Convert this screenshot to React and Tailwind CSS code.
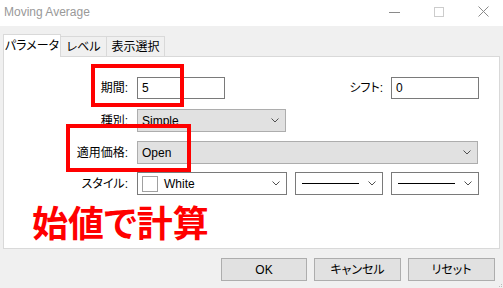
import React from "react";

const Chevron = () => (
    <svg width="8" height="5" viewBox="0 0 8 5" className="shrink-0">
        <polyline points="0.5,0.5 4,4 7.5,0.5" fill="none" stroke="#505050" strokeWidth="1" />
    </svg>
);

const Label = ({ children }) => (
    <div className="w-[125px] pr-[1px] text-right text-[12px] text-black">{children}</div>
);

const Select = ({ width, children, white }) => (
    <div
        className={`${width} h-[23px] flex items-center pl-[4px] pr-[6px] border ${
            white ? "bg-white border-[#7a7a7a]" : "bg-[#e1e1e1] border-[#adadad]"
        }`}
    >
        <div className="flex-1 flex items-center text-[12px] text-black">{children}</div>
        <Chevron />
    </div>
);

const Button = ({ children, w }) => (
    <div className={`${w} h-[23px] flex items-center justify-center bg-[#e1e1e1] border border-[#adadad] text-[12px] text-black`}>
        {children}
    </div>
);

export default function App() {
    return (
        <div className="w-[503px] h-[288px] bg-[#f0f0f0] flex flex-col overflow-hidden font-['Liberation_Sans','Noto_Sans_CJK_JP',sans-serif] [font-feature-settings:'palt']">
            {/* title bar */}
            <div className="h-[26px] bg-white flex items-start shrink-0">
                <div className="pl-[4px] pt-[4px] text-[12px] leading-[16px] text-[#999999]">Moving Average</div>
                <div className="ml-auto flex items-center gap-[34px] pr-[14px] pt-[6px]">
                    <svg width="11" height="10" viewBox="0 0 11 10">
                        <line x1="0" y1="5.5" x2="11" y2="5.5" stroke="#8a8a8a" strokeWidth="1" />
                    </svg>
                    <svg width="10" height="10" viewBox="0 0 10 10">
                        <rect x="0.5" y="0.5" width="9" height="9" fill="none" stroke="#cccccc" strokeWidth="1" />
                    </svg>
                    <svg width="11" height="11" viewBox="0 0 11 11">
                        <line x1="0.5" y1="0.5" x2="10.5" y2="10.5" stroke="#8a8a8a" strokeWidth="1" />
                        <line x1="10.5" y1="0.5" x2="0.5" y2="10.5" stroke="#8a8a8a" strokeWidth="1" />
                    </svg>
                </div>
            </div>

            {/* tabs */}
            <div className="mt-[8px] pl-[3px] h-[22px] flex items-end shrink-0 text-[12px] text-black">
                <div className="relative z-10 -mb-px w-[58px] h-[23px] bg-white border border-b-0 border-[#d9d9d9] flex items-center justify-center">
                    パラメータ
                </div>
                <div className="w-[46px] h-[20px] border-t border-r border-[#d9d9d9] flex items-center justify-center">
                    レベル
                </div>
                <div className="w-[58px] h-[20px] border-t border-r border-[#d9d9d9] flex items-center justify-center">
                    表示選択
                </div>
            </div>

            {/* panel */}
            <div className="relative mx-[3px] h-[193px] bg-white border border-[#d9d9d9] shrink-0 flex flex-col pt-[20px]">
                <div className="flex items-center h-[22px]">
                    <Label>期間:</Label>
                    <div className="ml-[8px] w-[88px] h-[22px] border border-[#7a7a7a] flex items-center pl-[4px] text-[12px] text-black">5</div>
                    <div className="ml-auto text-[12px] text-black">シフト:</div>
                    <div className="ml-[8px] mr-[20px] w-[88px] h-[22px] border border-[#7a7a7a] flex items-center pl-[4px] text-[12px] text-black">0</div>
                </div>
                <div className="flex items-center mt-[10px]">
                    <Label>種別:</Label>
                    <div className="ml-[8px]">
                        <Select width="w-[149px]">Simple</Select>
                    </div>
                </div>
                <div className="flex items-center mt-[9px]">
                    <Label>適用価格:</Label>
                    <div className="ml-[8px]">
                        <Select width="w-[341px]">Open</Select>
                    </div>
                </div>
                <div className="flex items-center mt-[8px]">
                    <Label>スタイル:</Label>
                    <div className="ml-[8px] flex gap-[8px]">
                        <Select width="w-[150px]" white>
                            <div className="w-[16px] h-[16px] border border-[#a0a0a0] bg-white mr-[6px]" />
                            White
                        </Select>
                        <Select width="w-[88px]" white>
                            <div className="w-[57px] h-px bg-black ml-[2px]" />
                        </Select>
                        <Select width="w-[88px]" white>
                            <div className="w-[57px] h-px bg-black ml-[2px]" />
                        </Select>
                    </div>
                </div>
                <div className="mt-[8px] ml-[28px] text-[36px] leading-[36px] font-bold text-[#ff0000] font-['Noto_Sans_CJK_JP',sans-serif]">
                    始値で計算
                </div>

                {/* annotation boxes */}
                <div className="absolute left-[87px] top-[7px] w-[93px] h-[43px] border-[4px] border-[#ff0000]" />
                <div className="absolute left-[62px] top-[67px] w-[125px] h-[48px] border-[4px] border-[#ff0000]" />
            </div>

            {/* buttons */}
            <div className="mt-[9px] flex justify-end gap-[7px] pr-[8px] relative">
                <Button w="w-[86px]">OK</Button>
                <Button w="w-[87px]">キャンセル</Button>
                <Button w="w-[87px]">リセット</Button>
                <div className="absolute right-[1px] bottom-[-6px] grid grid-cols-2 gap-[1px]">
                    <div className="w-px h-px" />
                    <div className="w-px h-px bg-[#bcbcbc]" />
                    <div className="w-px h-px bg-[#bcbcbc]" />
                    <div className="w-px h-px bg-[#bcbcbc]" />
                </div>
            </div>
        </div>
    );
}
